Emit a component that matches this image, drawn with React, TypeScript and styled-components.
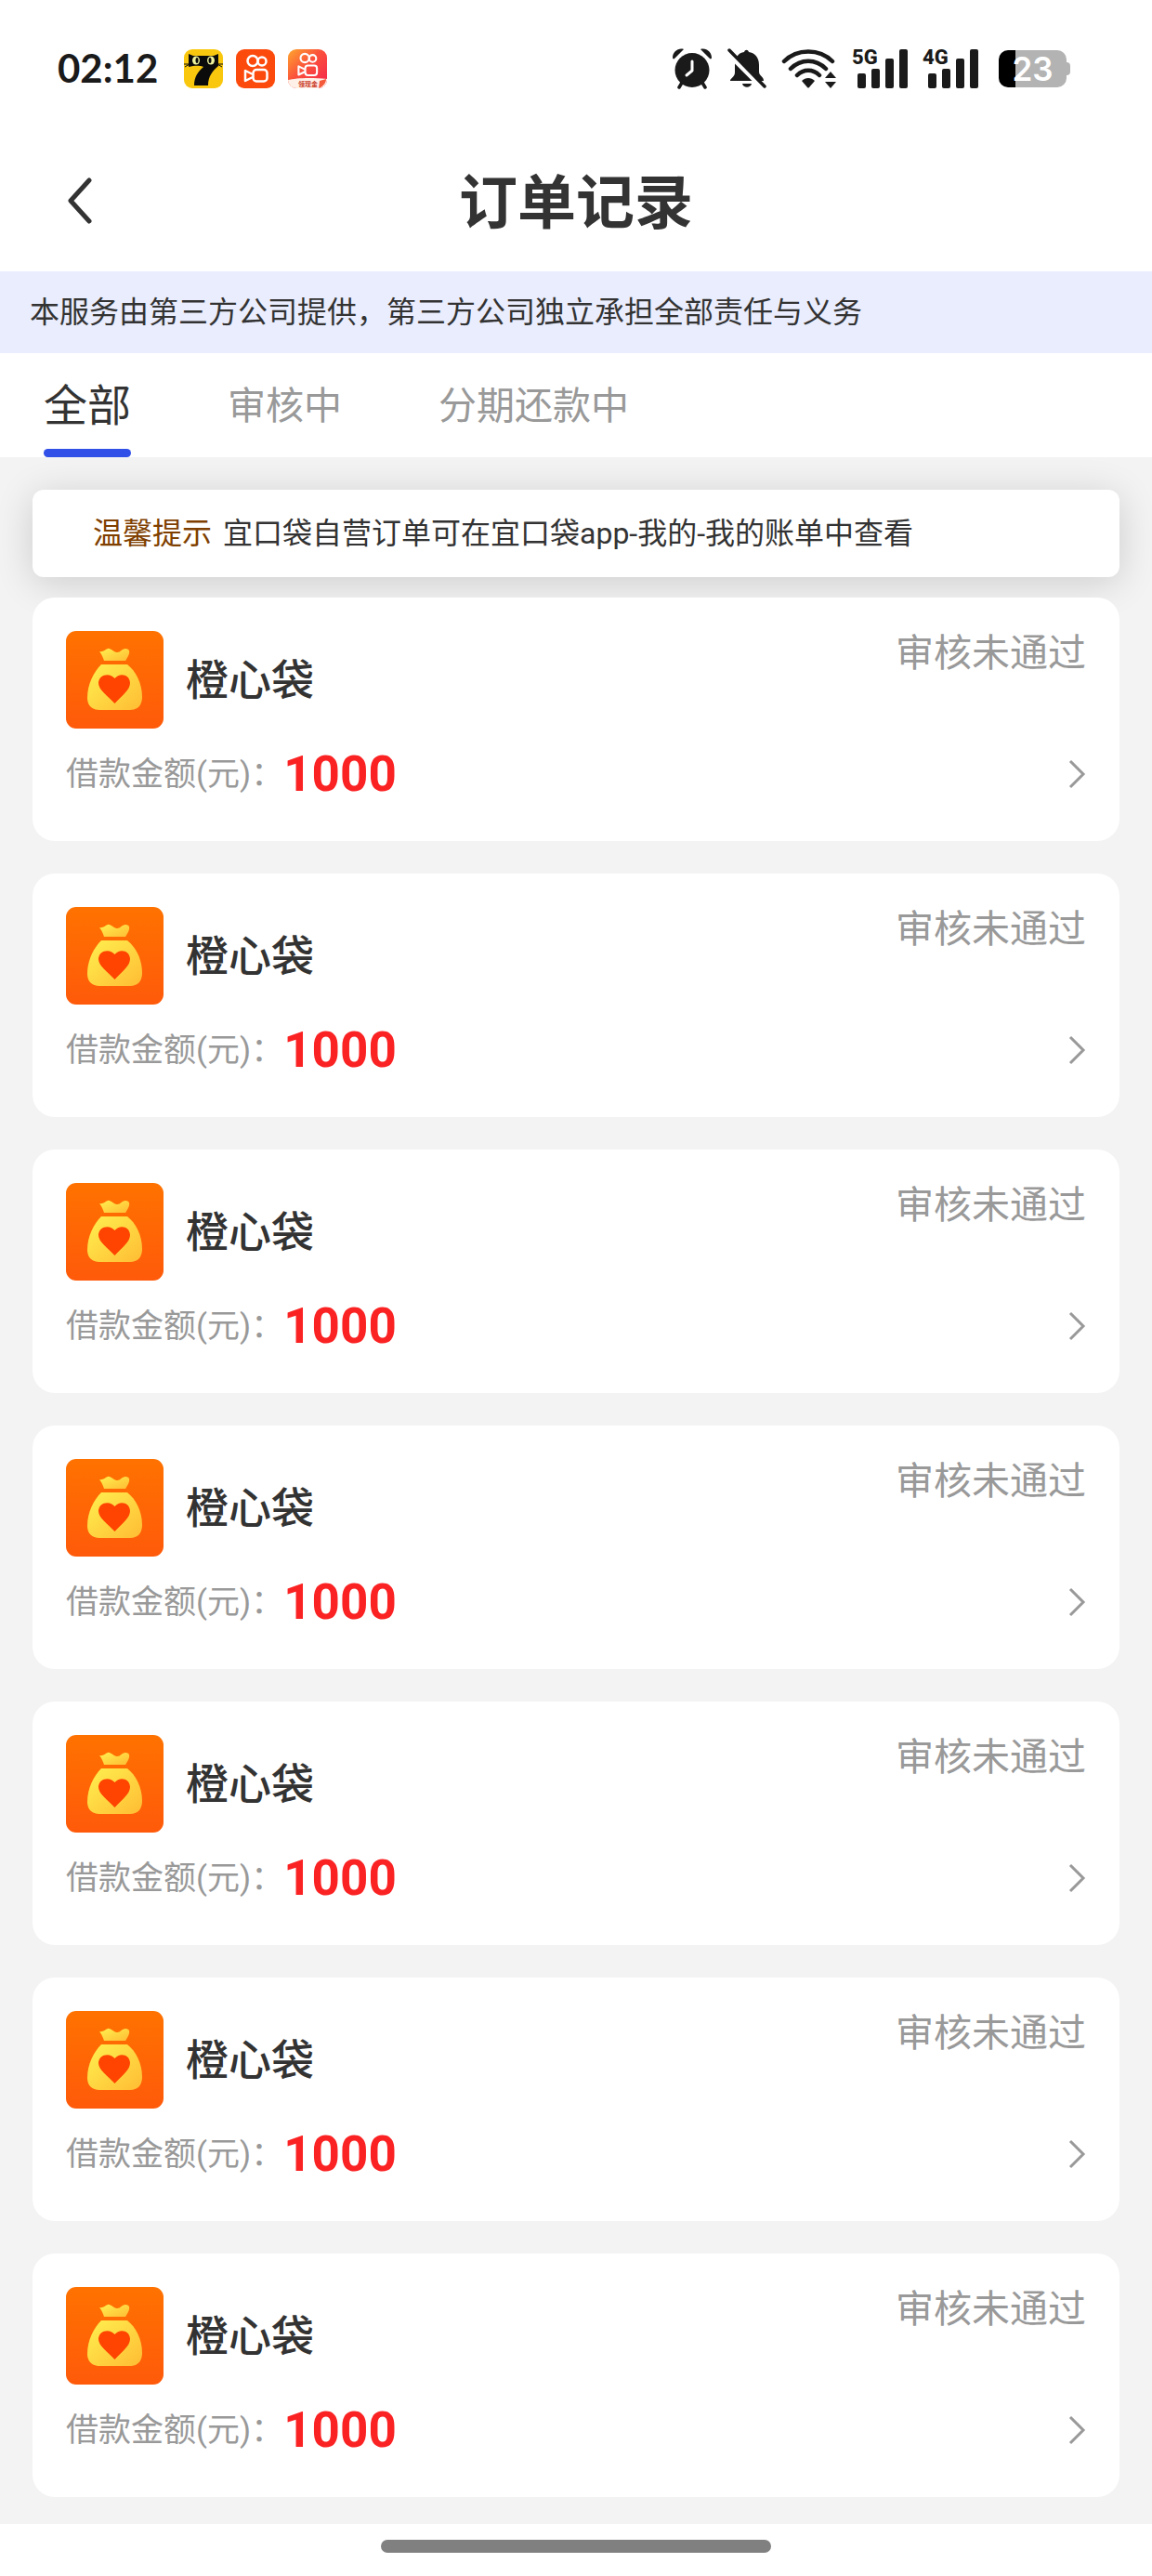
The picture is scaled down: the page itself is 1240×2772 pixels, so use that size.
import React, { useState } from "react";
import styled, { createGlobalStyle } from "styled-components";

const GlobalStyle = createGlobalStyle`
  *, *::before, *::after { box-sizing: border-box; }
  body {
    margin: 0;
    background: #fff;
    color: #333;
    font-family: Roboto, "Noto Sans CJK SC", sans-serif;
  }
  button { border: 0; background: none; padding: 0; font: inherit; color: inherit; cursor: pointer; }
  svg { display: block; flex: none; }
`;

const Page = styled.div`
  display: flex;
  flex-direction: column;
  min-height: 100vh;
`;

const StatusBar = styled.div`
  display: flex;
  align-items: center;
  justify-content: space-between;
  height: 140px;
  padding: 8px 88px 0 62px;
  color: #1a1a1a;
`;

const StatusGroup = styled.div<{ $gap: number }>`
  display: flex;
  align-items: center;
  gap: ${(p) => p.$gap}px;
`;

const Clock = styled.time`
  margin-right: 14px;
  padding-bottom: 2px;
  font: 700 42px/50px Lato, sans-serif;
`;

const Signal = styled.div`
  position: relative;
  width: 60px;
  height: 44px;
`;

const SignalLabel = styled.span`
  position: absolute;
  top: 0;
  left: 0;
  font: 800 22px/20px Roboto, sans-serif;
`;

const Battery = styled.div`
  position: relative;
  display: flex;
  align-items: center;
  justify-content: center;
  width: 73px;
  height: 40px;
  margin: 0 4px 0 6px;
  border-radius: 10px;
  background: linear-gradient(90deg, #000 18px, #b3b3b3 18px);
  color: #fff;
  font: 600 35px/40px Inter, sans-serif;

  &::after {
    content: "";
    position: absolute;
    top: 13px;
    right: -4px;
    width: 4px;
    height: 14px;
    border-radius: 0 4px 4px 0;
    background: #b3b3b3;
  }
`;

const NavBar = styled.header`
  display: grid;
  grid-template-columns: 100px 1fr 100px;
  align-items: center;
  height: 152px;
  padding: 0 35px;
`;

const BackButton = styled.button`
  display: flex;
  align-items: center;
  height: 100px;
  padding-left: 36px;
`;

const Title = styled.h1`
  margin: 0;
  padding-top: 6px;
  text-align: center;
  font-size: 63px;
  line-height: 80px;
  font-weight: 700;
`;

const Notice = styled.p`
  margin: 0;
  padding: 20px 32px;
  background: #eaedfd;
  font-size: 32px;
  line-height: 48px;
`;

const Tabs = styled.nav`
  display: flex;
  gap: 104px;
  height: 112px;
  padding: 0 47px;
`;

const Tab = styled.button<{ $active: boolean }>`
  display: flex;
  flex-direction: column;
  justify-content: space-between;
  padding-top: 27px;
  color: ${(p) => (p.$active ? "#333" : "#999")};
  font-size: ${(p) => (p.$active ? 47 : 41)}px;
  line-height: 60px;

  &::after {
    content: "";
    width: 100%;
    height: 9px;
    border-radius: 5px;
    background: ${(p) => (p.$active ? "#3150e8" : "transparent")};
  }
`;

const Content = styled.main`
  flex: 1;
  padding: 35px 35px 29px;
  background: #f3f3f3;
`;

const Tip = styled.p`
  display: flex;
  gap: 12px;
  margin: 0 0 22px;
  padding: 23px 65px;
  border-radius: 12px;
  background: #fff;
  box-shadow: 0 6px 40px rgba(0, 0, 0, 0.16);
  font-size: 32px;
  line-height: 48px;
`;

const TipLabel = styled.strong`
  flex: none;
  color: #7f3f00;
  font-weight: 400;
`;

const OrderList = styled.ul`
  display: flex;
  flex-direction: column;
  gap: 35px;
  margin: 0;
  padding: 0;
  list-style: none;
`;

const OrderCard = styled.a`
  display: flex;
  flex-direction: column;
  gap: 15px;
  padding: 36px 36px 38px;
  border-radius: 24px;
  background: #fff;
  color: inherit;
  text-decoration: none;
`;

const CardHead = styled.div`
  display: flex;
  align-items: center;
  gap: 24px;
`;

const ProductName = styled.h2`
  margin: 0;
  font-size: 46px;
  line-height: 60px;
  font-weight: 500;
`;

const OrderStatus = styled.span`
  align-self: flex-start;
  margin-left: auto;
  color: #999;
  font-size: 41px;
  line-height: 48px;
`;

const CardRow = styled.div`
  display: flex;
  align-items: center;
  height: 68px;
`;

const AmountLabel = styled.span`
  padding-top: 2px;
  color: #999;
  font-size: 35px;
  line-height: 48px;
`;

const Amount = styled.strong`
  color: #fa2223;
  font-size: 53px;
  line-height: 68px;
  font-weight: 700;
`;

const Spacer = styled.span`
  flex: 1;
`;

const HomeArea = styled.footer`
  display: flex;
  justify-content: center;
  height: 56px;
  padding-top: 17px;
`;

const HomeIndicator = styled.div`
  width: 420px;
  height: 14px;
  border-radius: 7px;
  background: #808080;
`;

const CatAppIcon = () => (
  <svg width="42" height="42" viewBox="0 0 42 42" aria-hidden="true">
    <rect width="42" height="42" rx="9" fill="#f9c80e" />
    <path d="M5 5l5 2h22l5-2v13c-6 5-11 11-11 21H11c0-9 4-15 10-20-6-2-10-1-16 0z" fill="#0b0b0b" />
    <path d="M0 16h6l-5 3M42 16h-6l5 3" fill="none" stroke="#0b0b0b" />
    <ellipse cx="13" cy="12" rx="4" ry="4.500" fill="#eef29a" />
    <ellipse cx="29" cy="12" rx="4" ry="4.500" fill="#eef29a" />
    <ellipse cx="14" cy="12" rx="1.500" ry="3" fill="#0b0b0b" />
    <ellipse cx="28" cy="12" rx="1.500" ry="3" fill="#0b0b0b" />
  </svg>
);

const Camera = () => (
  <g fill="none" stroke="#fff" strokeWidth="2.500" strokeLinejoin="round">
    <circle cx="18" cy="12.500" r="5.500" />
    <circle cx="28" cy="13" r="4.500" />
    <rect x="18.500" y="22" width="15" height="12.500" rx="3.500" />
    <path d="M18 27l-8-4v11l8-4" />
  </g>
);

const VideoAppIcon = () => (
  <svg width="42" height="42" viewBox="0 0 42 42" aria-hidden="true">
    <rect width="42" height="42" rx="9" fill="#fc4a0c" />
    <Camera />
  </svg>
);

const VideoRewardIcon = () => (
  <svg width="42" height="42" viewBox="0 0 42 42" aria-hidden="true">
    <defs>
      <linearGradient id="reward" x1="0" y1="0" x2="1" y2="1">
        <stop offset="0" stopColor="#ffa62e" />
        <stop offset=".45" stopColor="#fb503c" />
        <stop offset="1" stopColor="#f4244e" />
      </linearGradient>
      <clipPath id="rewardClip"><rect width="42" height="42" rx="9" /></clipPath>
    </defs>
    <g clipPath="url(#rewardClip)">
      <rect width="42" height="42" fill="url(#reward)" />
      <g transform="translate(3 -1) scale(.84)"><Camera /></g>
      <path d="M0 33c8-2 24-3 42-1v10H0z" fill="#fff1e8" />
      <path d="M34 34l7-2c0 4-3 8-8 10z" fill="#f45a3a" />
      <text x="11" y="40" fontSize="7" fontWeight="700" fill="#c8351c">领现金</text>
    </g>
  </svg>
);

const AlarmIcon = () => (
  <svg width="44" height="44" viewBox="0 0 44 44" fill="#1a1a1a" aria-label="闹钟">
    <path d="M1 10C1 4 7-1 13 1L3 11C2 12 1 11 1 10zM43 10C43 4 37-1 31 1l10 10c1 1 2 0 2-1z" />
    <path d="M11 37l-3 5M33 37l3 5" stroke="#1a1a1a" strokeWidth="3.500" strokeLinecap="round" />
    <circle cx="22" cy="23.500" r="18.500" />
    <path d="M22 14v10l-6 5" fill="none" stroke="#fff" strokeWidth="3" strokeLinecap="round" strokeLinejoin="round" />
  </svg>
);

const MutedIcon = () => (
  <svg width="42" height="44" viewBox="0 0 42 44" fill="#1a1a1a" aria-label="静音">
    <path d="M3 35c0-3 5-4 5-9v-7C8 9 12 5 18 4c1-3 4-3 5 0 6 1 11 5 11 14v7c0 5 5 5 5 10z" />
    <path d="M16 38h10c-1 5-9 5-10 0z" />
    <path d="M-2 3l40 40" stroke="#fff" strokeWidth="5" />
    <path d="M2 2l38 39" stroke="#1a1a1a" strokeWidth="3.500" strokeLinecap="round" />
  </svg>
);

const WifiIcon = () => (
  <svg width="60" height="44" viewBox="0 0 60 44" fill="none" stroke="#1a1a1a" aria-label="无线网络">
    <path d="M3 14c14-14 38-14 52 0M10 22c11-11 27-11 38 0M17 29c7-7 17-7 24 0" strokeWidth="4.500" strokeLinecap="round" />
    <path d="M22 35c4-4 10-4 14 0l-6 7q-1 1-2 0z" fill="#1a1a1a" stroke="none" />
    <path d="M53 25l6 7H47zM53 43l6-7H47z" fill="#1a1a1a" stroke="none" />
  </svg>
);

const SignalBars = () => (
  <svg width="60" height="44" viewBox="0 0 60 44" fill="#1a1a1a" aria-hidden="true">
    <rect x="6" y="27" width="9" height="16" rx="2" />
    <rect x="21" y="22" width="9" height="21" rx="2" />
    <rect x="36" y="11" width="9" height="32" rx="2" />
    <rect x="51" y="1" width="9" height="42" rx="2" />
  </svg>
);

const BackIcon = () => (
  <svg width="30" height="50" viewBox="0 0 30 50" fill="none" stroke="#333" strokeWidth="5" strokeLinecap="round" strokeLinejoin="round" aria-hidden="true">
    <path d="M25 3L5 25l20 22" />
  </svg>
);

const ChevronIcon = () => (
  <svg width="20" height="32" viewBox="0 0 20 32" fill="none" stroke="#999" strokeWidth="3" aria-hidden="true">
    <path d="M3 2l14 14L3 30" />
  </svg>
);

const PouchIcon = () => (
  <svg width="105" height="105" viewBox="0 0 105 105" aria-hidden="true">
    <defs>
      <linearGradient id="pouchBg" x1="0" y1="0" x2="0" y2="1">
        <stop offset="0" stopColor="#ff7200" />
        <stop offset="1" stopColor="#ff5a0a" />
      </linearGradient>
      <linearGradient id="pouch" x1="0" y1="0" x2="1" y2="1">
        <stop offset="0" stopColor="#fff04f" />
        <stop offset="1" stopColor="#ffbc34" />
      </linearGradient>
    </defs>
    <rect width="105" height="105" rx="11" fill="url(#pouchBg)" />
    <path d="M36 22c4 1 6-2 9-3s6 4 10 4 5-4 9-4c5 0 5 4 3 8-2 3-2 4-3 5H41c-1-3-2-6-5-10z" fill="url(#pouch)" />
    <path d="M38 36h28c9 7 16 20 16 35 0 9-5 14-13 14H36c-8 0-13-5-13-13 0-15 7-28 15-36z" fill="url(#pouch)" />
    <path d="M52.500 78C44 69 35 63 35 56c0-9 12-12 17.500-5C58 44 69 47 69 56c0 7-8 13-16.500 22z" fill="#ff4300" />
  </svg>
);

const tabs = ["全部", "审核中", "分期还款中"];

const orders = Array.from({ length: 7 }, (_, i) => ({
  id: i + 1,
  name: "橙心袋",
  status: "审核未通过",
  amount: 1000,
}));

export default function App() {
  const [active, setActive] = useState(0);

  return (
    <>
      <GlobalStyle />
      <Page>
        <StatusBar>
          <StatusGroup $gap={14}>
            <Clock>02:12</Clock>
            <CatAppIcon />
            <VideoAppIcon />
            <VideoRewardIcon />
          </StatusGroup>
          <StatusGroup $gap={16}>
            <AlarmIcon />
            <MutedIcon />
            <WifiIcon />
            <Signal>
              <SignalLabel>5G</SignalLabel>
              <SignalBars />
            </Signal>
            <Signal>
              <SignalLabel>4G</SignalLabel>
              <SignalBars />
            </Signal>
            <Battery>23</Battery>
          </StatusGroup>
        </StatusBar>

        <NavBar>
          <BackButton aria-label="返回">
            <BackIcon />
          </BackButton>
          <Title>订单记录</Title>
        </NavBar>

        <Notice>本服务由第三方公司提供，第三方公司独立承担全部责任与义务</Notice>

        <Tabs>
          {tabs.map((label, i) => (
            <Tab key={label} $active={i === active} onClick={() => setActive(i)}>
              {label}
            </Tab>
          ))}
        </Tabs>

        <Content>
          <Tip>
            <TipLabel>温馨提示</TipLabel>
            <span>宜口袋自营订单可在宜口袋app-我的-我的账单中查看</span>
          </Tip>
          <OrderList>
            {orders.map((order) => (
              <li key={order.id}>
                <OrderCard href={`#order-${order.id}`}>
                  <CardHead>
                    <PouchIcon />
                    <ProductName>{order.name}</ProductName>
                    <OrderStatus>{order.status}</OrderStatus>
                  </CardHead>
                  <CardRow>
                    <AmountLabel>借款金额(元)：</AmountLabel>
                    <Amount>{order.amount}</Amount>
                    <Spacer />
                    <ChevronIcon />
                  </CardRow>
                </OrderCard>
              </li>
            ))}
          </OrderList>
        </Content>

        <HomeArea>
          <HomeIndicator />
        </HomeArea>
      </Page>
    </>
  );
}
